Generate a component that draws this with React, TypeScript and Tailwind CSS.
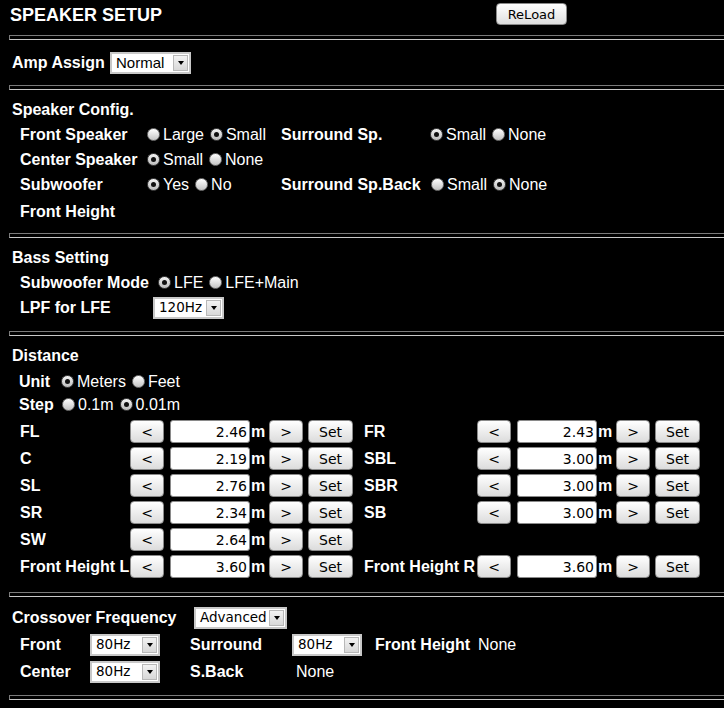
import React from 'react';

function Rule() {
  return (
    <div className="ml-[9px] mr-[-20px] h-[5px] border-t border-l border-b border-t-[#7a7a7a] border-l-[#7a7a7a] border-b-[#c8c8c8]" />
  );
}

function Radio({ checked = false, label }: { checked?: boolean; label: string }) {
  return (
    <span className="inline-flex items-center mr-[6px]">
      <span
        className={`w-[13px] h-[13px] rounded-full border flex items-center justify-center ${
          checked
            ? 'border-[#444] bg-gradient-to-b from-[#f4f4f4] to-[#bdbdbd]'
            : 'border-[#777] bg-gradient-to-b from-white to-[#c4c4c4]'
        }`}
      >
        {checked && <span className="w-[5px] h-[5px] rounded-full bg-[#111]" />}
      </span>
      <span className="ml-[3px]">{label}</span>
    </span>
  );
}

function Select({ value, className, textClass }: { value: string; className: string; textClass: string }) {
  return (
    <span className={`inline-flex h-[22px] border-2 border-[#c8c8c8] bg-white ${className}`}>
      <span className={`flex-1 flex items-center pl-[4px] text-black ${textClass}`}>{value}</span>
      <span className="w-[15px] my-[1px] mr-[1px] bg-gradient-to-b from-[#f2f2f2] to-[#d8d8d8] border border-[#b8b8b8] flex items-center justify-center">
        <span className="w-0 h-0 border-l-[3px] border-r-[3px] border-t-[4px] border-l-transparent border-r-transparent border-t-black" />
      </span>
    </span>
  );
}

function Btn({ label, className }: { label: string; className: string }) {
  return (
    <span
      className={`inline-flex items-center justify-center h-[23px] rounded-[4px] border border-[#8a8a8a] bg-gradient-to-b from-white to-[#dcdcdc] text-black font-['DejaVu_Sans',sans-serif] text-[14px] ${className}`}
    >
      {label}
    </span>
  );
}

function DistRow({ label, value, labelW }: { label: string; value: string; labelW: string }) {
  return (
    <div className="flex items-center">
      <span className={`font-bold whitespace-nowrap ${labelW}`}>{label}</span>
      <Btn label="<" className="w-[34px]" />
      <span className="ml-[6px] w-[80px] h-[23px] rounded-[3px] border border-[#8a8a8a] bg-white text-black flex items-center justify-end pr-[2px] font-['DejaVu_Sans',sans-serif] text-[14px]">
        {value}
      </span>
      <span className="w-[19px] pl-[1px] font-bold">m</span>
      <Btn label=">" className="w-[34px]" />
      <Btn label="Set" className="ml-[5px] w-[45px]" />
    </div>
  );
}

const leftRows = [
  ['FL', '2.46'],
  ['C', '2.19'],
  ['SL', '2.76'],
  ['SR', '2.34'],
  ['SW', '2.64'],
  ['Front Height L', '3.60'],
];

const rightRows: (string[] | null)[] = [
  ['FR', '2.43'],
  ['SBL', '3.00'],
  ['SBR', '3.00'],
  ['SB', '3.00'],
  null,
  ['Front Height R', '3.60'],
];

const selFont = "font-['DejaVu_Sans',sans-serif] text-[13.5px]";

export default function App() {
  return (
    <div className="min-h-screen w-[724px] overflow-hidden bg-black text-white font-['Liberation_Sans',Arial,sans-serif] text-[16px] leading-none">
      {/* header */}
      <div className="h-[35px] flex items-start">
        <span className="w-[496px] pl-[10px] pt-[6px] text-[18px] font-bold">SPEAKER SETUP</span>
        <span className="mt-[3px] w-[71px] h-[22px] rounded-[4px] border border-[#8a8a8a] bg-gradient-to-b from-white to-[#dedede] text-black flex items-center justify-center font-['DejaVu_Sans',sans-serif] text-[13px]">
          ReLoad
        </span>
      </div>
      <Rule />

      {/* amp assign */}
      <div className="h-[45px] flex items-center pl-[12px]">
        <span className="w-[98px] font-bold">Amp Assign</span>
        <Select value="Normal" className="w-[81px]" textClass="text-[15px]" />
      </div>
      <Rule />

      {/* speaker config */}
      <div className="pt-[10px] pb-[6px]">
        <div className="h-[20px] flex items-center pl-[12px] font-bold">Speaker Config.</div>
        <div className="mt-[2px] pl-[20px]">
          <div className="h-[25px] flex items-center">
            <span className="w-[127px] font-bold">Front Speaker</span>
            <span className="w-[134px] flex items-center">
              <Radio label="Large" />
              <Radio checked label="Small" />
            </span>
            <span className="w-[149px] font-bold">Surround Sp.</span>
            <Radio checked label="Small" />
            <Radio label="None" />
          </div>
          <div className="h-[25px] flex items-center">
            <span className="w-[127px] font-bold">Center Speaker</span>
            <Radio checked label="Small" />
            <Radio label="None" />
          </div>
          <div className="h-[25px] flex items-center">
            <span className="w-[127px] font-bold">Subwoofer</span>
            <span className="w-[134px] flex items-center">
              <Radio checked label="Yes" />
              <Radio label="No" />
            </span>
            <span className="w-[150px] font-bold whitespace-nowrap">Surround Sp.Back</span>
            <Radio label="Small" />
            <Radio checked label="None" />
          </div>
          <div className="h-[30px] flex items-center font-bold">Front Height</div>
        </div>
      </div>
      <Rule />

      {/* bass */}
      <div className="pt-[10px] pb-[11px]">
        <div className="h-[20px] flex items-center pl-[12px] font-bold">Bass Setting</div>
        <div className="mt-[2px] pl-[20px]">
          <div className="h-[25px] flex items-center">
            <span className="w-[138px] font-bold">Subwoofer Mode</span>
            <Radio checked label="LFE" />
            <Radio label="LFE+Main" />
          </div>
          <div className="h-[25px] flex items-center">
            <span className="w-[133px] font-bold">LPF for LFE</span>
            <Select value="120Hz" className="w-[71px]" textClass={selFont} />
          </div>
        </div>
      </div>
      <Rule />

      {/* distance */}
      <div className="pt-[10px] pb-[12px]">
        <div className="h-[20px] flex items-center pl-[12px] font-bold">Distance</div>
        <div className="mt-[4px] pl-[19px]">
          <div className="h-[23px] flex items-center">
            <span className="w-[42px] font-bold">Unit</span>
            <Radio checked label="Meters" />
            <Radio label="Feet" />
          </div>
          <div className="h-[23px] flex items-center">
            <span className="w-[43px] font-bold">Step</span>
            <Radio label="0.1m" />
            <Radio checked label="0.01m" />
          </div>
        </div>
        <div className="mt-[2px] pl-[20px]">
          {leftRows.map((row, i) => (
            <div key={row[0]} className="h-[27px] flex items-center">
              <DistRow label={row[0]} value={row[1]} labelW="w-[110px]" />
              <span className="w-[11px]" />
              {rightRows[i] && (
                <DistRow label={rightRows[i]![0]} value={rightRows[i]![1]} labelW="w-[113px]" />
              )}
            </div>
          ))}
        </div>
      </div>
      <Rule />

      {/* crossover */}
      <div className="pt-[7px] pb-[10px]">
        <div className="h-[27px] flex items-center pl-[12px]">
          <span className="w-[182px] font-bold">Crossover Frequency</span>
          <Select value="Advanced" className="w-[93px]" textClass={selFont} />
        </div>
        <div className="h-[27px] flex items-center pl-[20px]">
          <span className="w-[70px] font-bold">Front</span>
          <Select value="80Hz" className="w-[70px]" textClass={selFont} />
          <span className="ml-[30px] w-[102px] font-bold">Surround</span>
          <Select value="80Hz" className="w-[70px]" textClass={selFont} />
          <span className="ml-[13px] w-[103px] font-bold">Front Height</span>
          <span>None</span>
        </div>
        <div className="h-[27px] flex items-center pl-[20px]">
          <span className="w-[70px] font-bold">Center</span>
          <Select value="80Hz" className="w-[70px]" textClass={selFont} />
          <span className="ml-[30px] w-[106px] font-bold">S.Back</span>
          <span>None</span>
        </div>
      </div>
      <Rule />
    </div>
  );
}
